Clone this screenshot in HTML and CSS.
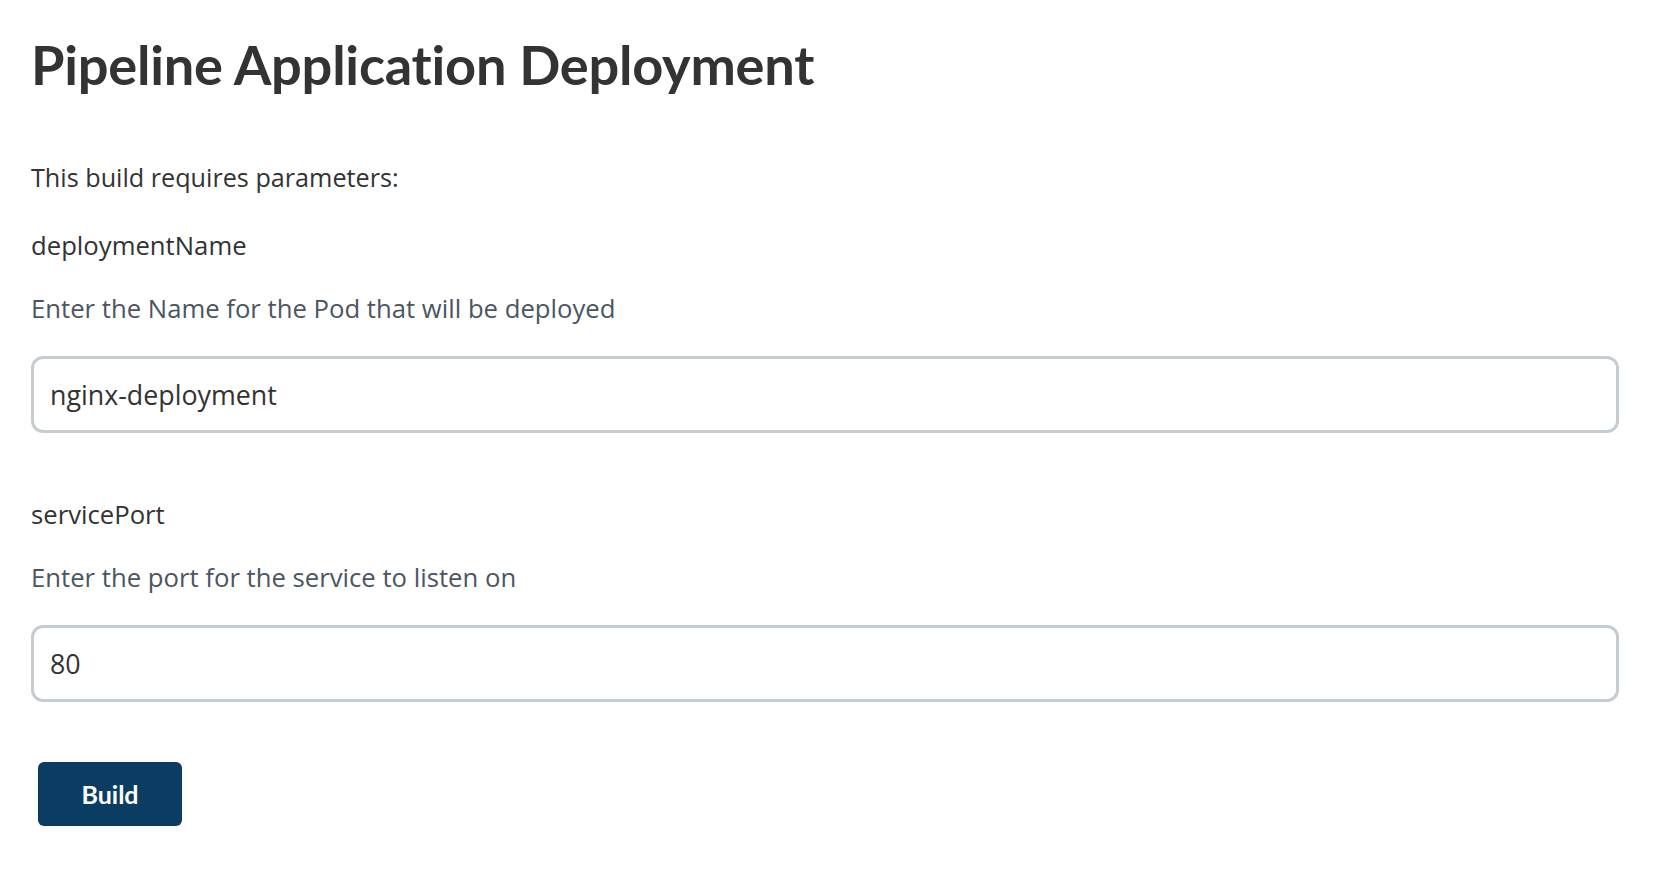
FILE: index.html
```html
<!DOCTYPE html>
<html lang="en">
<head>
<meta charset="utf-8">
<title>Pipeline Application Deployment</title>
<link rel="stylesheet" href="styles.css">
</head>
<body>
<main class="page">
  <h1 class="title">Pipeline Application Deployment</h1>
  <p class="intro">This build requires parameters:</p>
  <div class="param">
    <div class="param-name">deploymentName</div>
    <div class="param-desc">Enter the Name for the Pod that will be deployed</div>
    <input class="param-input" type="text" value="nginx-deployment">
  </div>
  <div class="param param-second">
    <div class="param-name">servicePort</div>
    <div class="param-desc">Enter the port for the service to listen on</div>
    <input class="param-input" type="text" value="80">
  </div>
  <div class="actions">
    <button class="build-btn" type="button">Build</button>
  </div>
</main>
</body>
</html>
```
FILE: styles.css
```css
* { box-sizing: border-box; }
html, body { margin: 0; padding: 0; background: #ffffff; }
body {
  font-family: "Open Sans", "Noto Sans", sans-serif;
  color: #333333;
}
.page {
  padding: 29px 47px 0 31px;
}
.title {
  margin: 0;
  font-family: Lato, "Open Sans", sans-serif;
  font-size: 54.2px;
  line-height: 72px;
  font-weight: 700;
  letter-spacing: -0.25px;
  font-variant-ligatures: none;
  color: #333333;
}
.intro {
  margin: 58px 0 0;
  font-size: 25.2px;
  line-height: 36px;
}
.param { margin-top: 33px; }
.param-second { margin-top: 64px; }
.param-name {
  font-size: 25.7px;
  line-height: 36px;
  color: #333333;
}
.param-desc {
  margin-top: 27px;
  font-size: 25.7px;
  line-height: 36px;
  color: #4b5662;
}
.param-input {
  display: block;
  width: 100%;
  height: 77px;
  margin-top: 29px;
  padding: 0 16px;
  border: 3px solid #c5cdd3;
  border-radius: 12px;
  font-family: "Open Sans", "Noto Sans", sans-serif;
  font-size: 26.8px;
  color: #333333;
  background: #ffffff;
  outline: none;
}
.actions { padding: 60px 0 0 7px; }
.build-btn {
  display: block;
  width: 144px;
  height: 64px;
  border: none;
  border-radius: 6px;
  background: #0a3d61;
  color: #ffffff;
  font-family: Lato, "Open Sans", sans-serif;
  font-size: 25px;
  font-weight: 700;
  cursor: pointer;
}
```
